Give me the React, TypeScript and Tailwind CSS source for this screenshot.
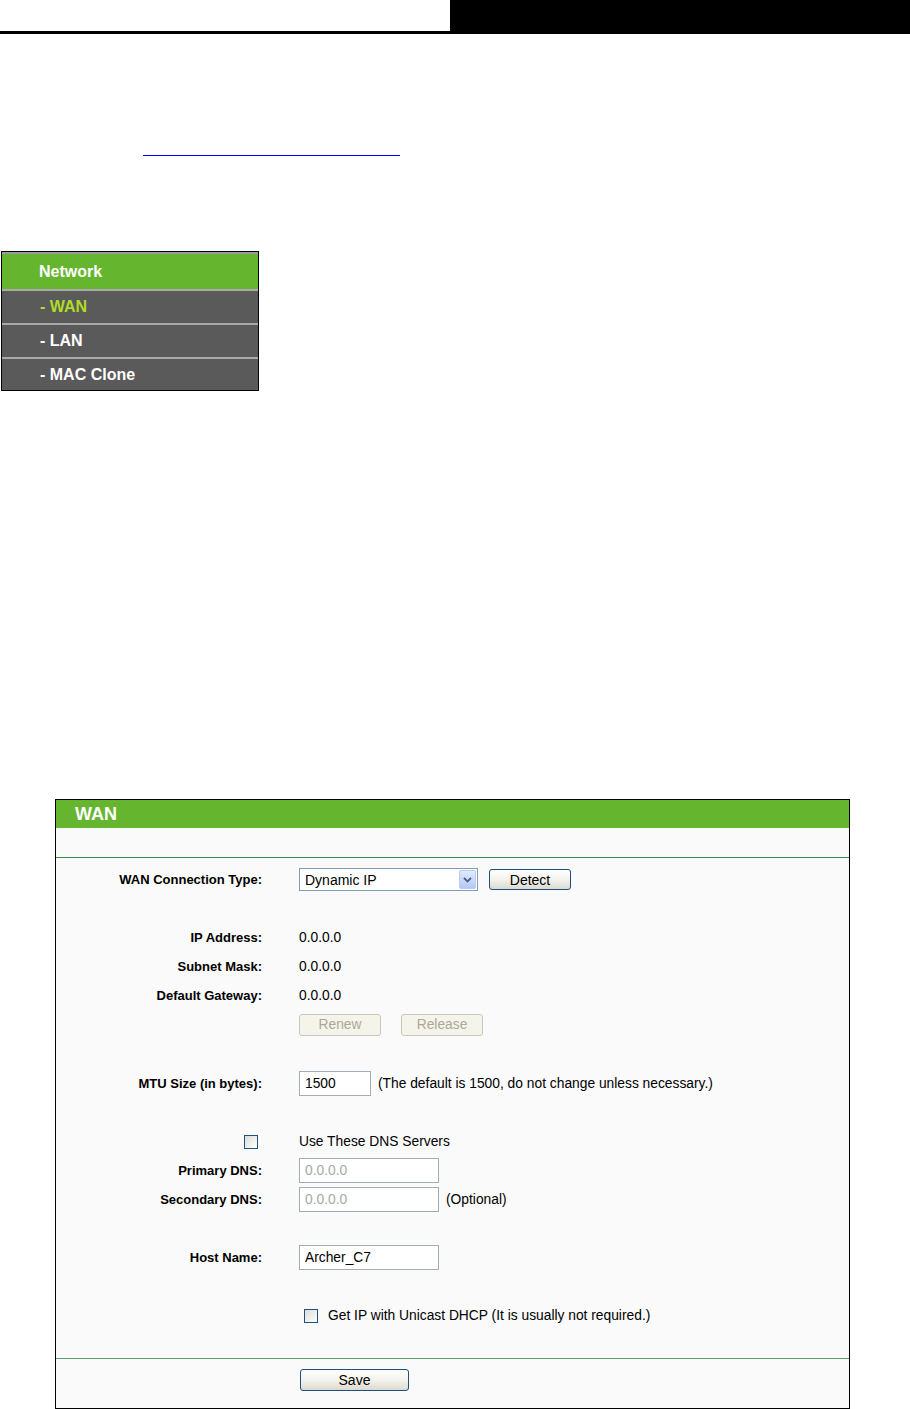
import React from "react";

const font = { fontFamily: '"Liberation Sans", Arial, sans-serif' };

function Label({ children }: { children?: React.ReactNode }) {
  return (
    <div className="text-right text-[13px] font-bold text-black leading-none whitespace-nowrap">
      {children}
    </div>
  );
}

function Row({
  label,
  h,
  children,
  className = "",
}: {
  label?: React.ReactNode;
  h: string;
  children?: React.ReactNode;
  className?: string;
}) {
  return (
    <div className={`grid grid-cols-[206px_1fr] gap-x-[37px] items-center ${h} ${className}`}>
      <Label>{label}</Label>
      <div className="flex items-center text-[13.8px] text-black leading-none whitespace-nowrap">
        {children}
      </div>
    </div>
  );
}

function Btn({ children, w, h, disabled = false }: { children: React.ReactNode; w: string; h: string; disabled?: boolean }) {
  return disabled ? (
    <div
      className={`${w} ${h} flex items-center justify-center rounded-[3px] border border-[#c9c7ba] bg-[#f5f4ea] text-[13.8px] text-[#aca899]`}
    >
      {children}
    </div>
  ) : (
    <div
      className={`${w} ${h} flex items-center justify-center rounded-[3px] border border-[#1f4f7a] bg-gradient-to-b from-[#ffffff] via-[#f3f2ec] to-[#dcdad0] text-[14px] text-black`}
    >
      {children}
    </div>
  );
}

function Input({ value, w, gray = false }: { value: string; w: string; gray?: boolean }) {
  return (
    <div
      className={`${w} h-[25px] flex items-center pl-[5px] border border-[#a5acb2] bg-white text-[13.8px] ${
        gray ? "text-[#a8a8a8]" : "text-black"
      }`}
    >
      {value}
    </div>
  );
}

function Checkbox() {
  return (
    <div className="w-[14px] h-[14px] border border-[#1c5180] bg-gradient-to-br from-[#dcdcd6] to-[#ffffff]" />
  );
}

export default function App() {
  return (
    <div className="w-[910px] h-[1409px] bg-white overflow-hidden" style={font}>
      {/* top header */}
      <div className="flex h-[34px]">
        <div className="w-[450px] h-[34px] border-b-[3px] border-black bg-white" />
        <div className="flex-1 h-[34px] bg-black" />
      </div>

      {/* hidden link underline */}
      <div className="ml-[143px] mt-[121px] w-[257px] h-[1px] bg-[#0000ff]" />

      {/* menu */}
      <div className="ml-[1px] mt-[95px] w-[258px] border border-black bg-[#5a5a5a]">
        <div className="h-[2px] bg-[#9a9a9a]" />
        <div className="h-[35px] bg-[#66b52f] flex items-center pl-[37px] pt-[1px] text-[16px] font-bold text-white">
          Network
        </div>
        <div className="h-[2px] bg-[#a9a9a9]" />
        <div className="h-[32px] flex items-center pl-[38px] text-[16px] font-bold text-[#aedd27]">
          - WAN
        </div>
        <div className="h-[2px] bg-[#a9a9a9]" />
        <div className="h-[32px] flex items-center pl-[38px] text-[16px] font-bold text-white">
          - LAN
        </div>
        <div className="h-[2px] bg-[#a9a9a9]" />
        <div className="h-[31px] flex items-center pl-[38px] text-[16px] font-bold text-white">
          - MAC Clone
        </div>
      </div>

      {/* WAN panel */}
      <div className="ml-[55px] mt-[408px] w-[795px] border border-black bg-[#fafafa]">
        <div className="h-[28px] bg-[#66b52f] flex items-center pl-[19px] text-[18px] font-bold text-white">
          WAN
        </div>
        <div className="h-[29px]" />
        <div className="h-[1px] bg-[#3b8a4a]" />

        <Row label="WAN Connection Type:" h="h-[25px]" className="mt-[9px]">
          <div className="w-[179px] h-[23px] flex items-center justify-between border border-[#7f9db9] bg-white pl-[5px] pr-[1px]">
            <span className="text-[14px]">Dynamic IP</span>
            <div className="w-[17px] h-[19px] rounded-[2px] border border-[#b9c9ef] bg-gradient-to-b from-[#e1eafe] to-[#b4c8f5] flex items-center justify-center">
              <svg width="9" height="6" viewBox="0 0 9 6">
                <path d="M1 1 L4.5 4.5 L8 1" stroke="#4d6185" strokeWidth="1.8" fill="none" />
              </svg>
            </div>
          </div>
          <div className="ml-[11px]">
            <Btn w="w-[82px]" h="h-[21px]">Detect</Btn>
          </div>
        </Row>

        <Row label="IP Address:" h="h-[29px]" className="mt-[31px]">0.0.0.0</Row>
        <Row label="Subnet Mask:" h="h-[29px]">0.0.0.0</Row>
        <Row label="Default Gateway:" h="h-[29px]">0.0.0.0</Row>
        <Row h="h-[22px]" className="mt-[4px]">
          <Btn w="w-[82px]" h="h-[22px]" disabled>
            Renew
          </Btn>
          <div className="ml-[20px]">
            <Btn w="w-[82px]" h="h-[22px]" disabled>
              Release
            </Btn>
          </div>
        </Row>

        <Row label="MTU Size (in bytes):" h="h-[25px]" className="mt-[35px]">
          <Input value="1500" w="w-[72px]" />
          <span className="ml-[7px]">(The default is 1500, do not change unless necessary.)</span>
        </Row>

        <Row
          label={
            <div className="flex justify-end pr-[4px]">
              <Checkbox />
            </div>
          }
          h="h-[29px]"
          className="mt-[31px]"
        >
          Use These DNS Servers
        </Row>
        <Row label="Primary DNS:" h="h-[29px]">
          <Input value="0.0.0.0" w="w-[140px]" gray />
        </Row>
        <Row label="Secondary DNS:" h="h-[29px]">
          <Input value="0.0.0.0" w="w-[140px]" gray />
          <span className="ml-[7px]">(Optional)</span>
        </Row>

        <Row label="Host Name:" h="h-[29px]" className="mt-[29px]">
          <Input value="Archer_C7" w="w-[140px]" />
        </Row>

        <Row h="h-[29px]" className="mt-[29px]">
          <div className="ml-[5px]">
            <Checkbox />
          </div>
          <span className="ml-[10px]">Get IP with Unicast DHCP (It is usually not required.)</span>
        </Row>

        <div className="mt-[28px] h-[1px] bg-[#5b9c6b]" />
        <Row h="h-[22px]" className="mt-[10px] mb-[17px]">
          <div className="ml-[1px]">
            <Btn w="w-[109px]" h="h-[22px]">Save</Btn>
          </div>
        </Row>
      </div>
    </div>
  );
}
